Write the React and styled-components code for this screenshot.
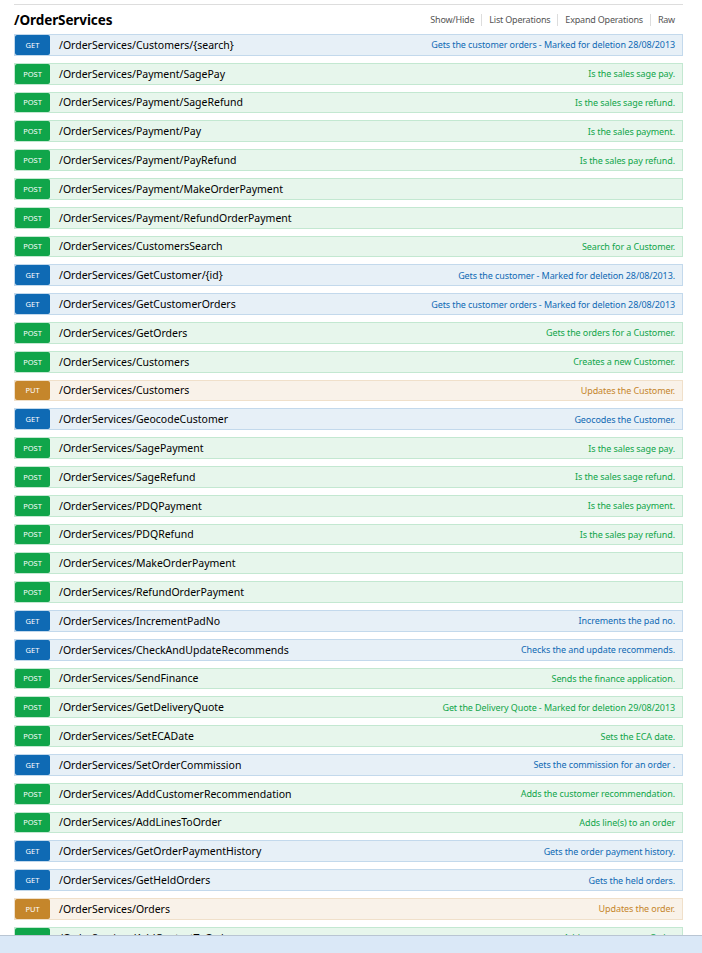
import styled, { createGlobalStyle } from 'styled-components'

const GlobalStyle = createGlobalStyle`
  html, body {
    margin: 0;
    padding: 0;
    background: #ffffff;
    font-family: "Noto Sans", "Open Sans", sans-serif;
  }
`

const colors = {
  get: { bg: '#e7f0f7', border: '#c3d9ec', badge: '#0f6ab4', text: '#0f6ab4' },
  post: { bg: '#e7f6ec', border: '#c3e8d1', badge: '#10a54a', text: '#10a54a' },
  put: { bg: '#f9f2e9', border: '#f0e0ca', badge: '#c5862b', text: '#c5862b' },
}

const operations = [
  ['get', '/OrderServices/Customers/{search}', 'Gets the customer orders - Marked for deletion 28/08/2013'],
  ['post', '/OrderServices/Payment/SagePay', 'Is the sales sage pay.'],
  ['post', '/OrderServices/Payment/SageRefund', 'Is the sales sage refund.'],
  ['post', '/OrderServices/Payment/Pay', 'Is the sales payment.'],
  ['post', '/OrderServices/Payment/PayRefund', 'Is the sales pay refund.'],
  ['post', '/OrderServices/Payment/MakeOrderPayment', ''],
  ['post', '/OrderServices/Payment/RefundOrderPayment', ''],
  ['post', '/OrderServices/CustomersSearch', 'Search for a Customer.'],
  ['get', '/OrderServices/GetCustomer/{id}', 'Gets the customer - Marked for deletion 28/08/2013.'],
  ['get', '/OrderServices/GetCustomerOrders', 'Gets the customer orders - Marked for deletion 28/08/2013'],
  ['post', '/OrderServices/GetOrders', 'Gets the orders for a Customer.'],
  ['post', '/OrderServices/Customers', 'Creates a new Customer.'],
  ['put', '/OrderServices/Customers', 'Updates the Customer.'],
  ['get', '/OrderServices/GeocodeCustomer', 'Geocodes the Customer.'],
  ['post', '/OrderServices/SagePayment', 'Is the sales sage pay.'],
  ['post', '/OrderServices/SageRefund', 'Is the sales sage refund.'],
  ['post', '/OrderServices/PDQPayment', 'Is the sales payment.'],
  ['post', '/OrderServices/PDQRefund', 'Is the sales pay refund.'],
  ['post', '/OrderServices/MakeOrderPayment', ''],
  ['post', '/OrderServices/RefundOrderPayment', ''],
  ['get', '/OrderServices/IncrementPadNo', 'Increments the pad no.'],
  ['get', '/OrderServices/CheckAndUpdateRecommends', 'Checks the and update recommends.'],
  ['post', '/OrderServices/SendFinance', 'Sends the finance application.'],
  ['post', '/OrderServices/GetDeliveryQuote', 'Get the Delivery Quote - Marked for deletion 29/08/2013'],
  ['post', '/OrderServices/SetECADate', 'Sets the ECA date.'],
  ['get', '/OrderServices/SetOrderCommission', 'Sets the commission for an order .'],
  ['post', '/OrderServices/AddCustomerRecommendation', 'Adds the customer recommendation.'],
  ['post', '/OrderServices/AddLinesToOrder', 'Adds line(s) to an order'],
  ['get', '/OrderServices/GetOrderPaymentHistory', 'Gets the order payment history.'],
  ['get', '/OrderServices/GetHeldOrders', 'Gets the held orders.'],
  ['put', '/OrderServices/Orders', 'Updates the order.'],
  ['post', '/OrderServices/AddContactToOrder', 'Adds a contact to an Order.'],
]

const Page = styled.div`
  padding: 4px 19px 0 14px;
`

const Resource = styled.div`
  border-top: 1px solid #dddddd;
`

const Heading = styled.div`
  display: flex;
  align-items: center;
  justify-content: space-between;
  height: 29px;
`

const Title = styled.h2`
  margin: 0;
  font-size: 13.5px;
  font-weight: bold;
  color: #000000;
  letter-spacing: -0.1px;
`

const Options = styled.ul`
  display: flex;
  margin: 0 8px 0 0;
  padding: 0;
  list-style: none;
  font-size: 9px;
  letter-spacing: -0.2px;
  color: #555555;
`

const Option = styled.li`
  padding: 0 7px;
  border-left: 1px solid #dddddd;
  line-height: 12px;
  &:first-child {
    border-left: none;
  }
  &:last-child {
    padding-right: 0;
  }
`

const Operations = styled.ul`
  margin: 0;
  padding: 0;
  list-style: none;
`

const Operation = styled.li`
  display: flex;
  align-items: center;
  box-sizing: border-box;
  height: 21.8px;
  margin-bottom: 7px;
  background: ${p => colors[p.$method].bg};
  border: 1px solid ${p => colors[p.$method].border};
`

const Badge = styled.span`
  display: flex;
  align-items: center;
  justify-content: center;
  width: 35px;
  height: 100%;
  border-radius: 2px;
  background: ${p => colors[p.$method].badge};
  color: #ffffff;
  font-size: 7.5px;
  text-transform: uppercase;
`

const Path = styled.span`
  margin-left: 9px;
  font-size: 10.5px;
  color: #000000;
`

const Description = styled.span`
  margin-left: auto;
  padding-right: 7px;
  font-size: 9px;
  letter-spacing: -0.1px;
  color: ${p => colors[p.$method].text};
`

const FooterBar = styled.div`
  position: fixed;
  left: 0;
  right: 0;
  bottom: 0;
  height: 17px;
  background: #dae8f7;
  border-top: 1px solid #b9c5d3;
`

export default function App() {
  return (
    <>
      <GlobalStyle />
      <Page>
        <Resource>
          <Heading>
            <Title>/OrderServices</Title>
            <Options>
              <Option>Show/Hide</Option>
              <Option>List Operations</Option>
              <Option>Expand Operations</Option>
              <Option>Raw</Option>
            </Options>
          </Heading>
          <Operations>
            {operations.map(([method, path, desc], i) => (
              <Operation key={i} $method={method}>
                <Badge $method={method}>{method}</Badge>
                <Path>{path}</Path>
                <Description $method={method}>{desc}</Description>
              </Operation>
            ))}
          </Operations>
        </Resource>
      </Page>
      <FooterBar />
    </>
  )
}
